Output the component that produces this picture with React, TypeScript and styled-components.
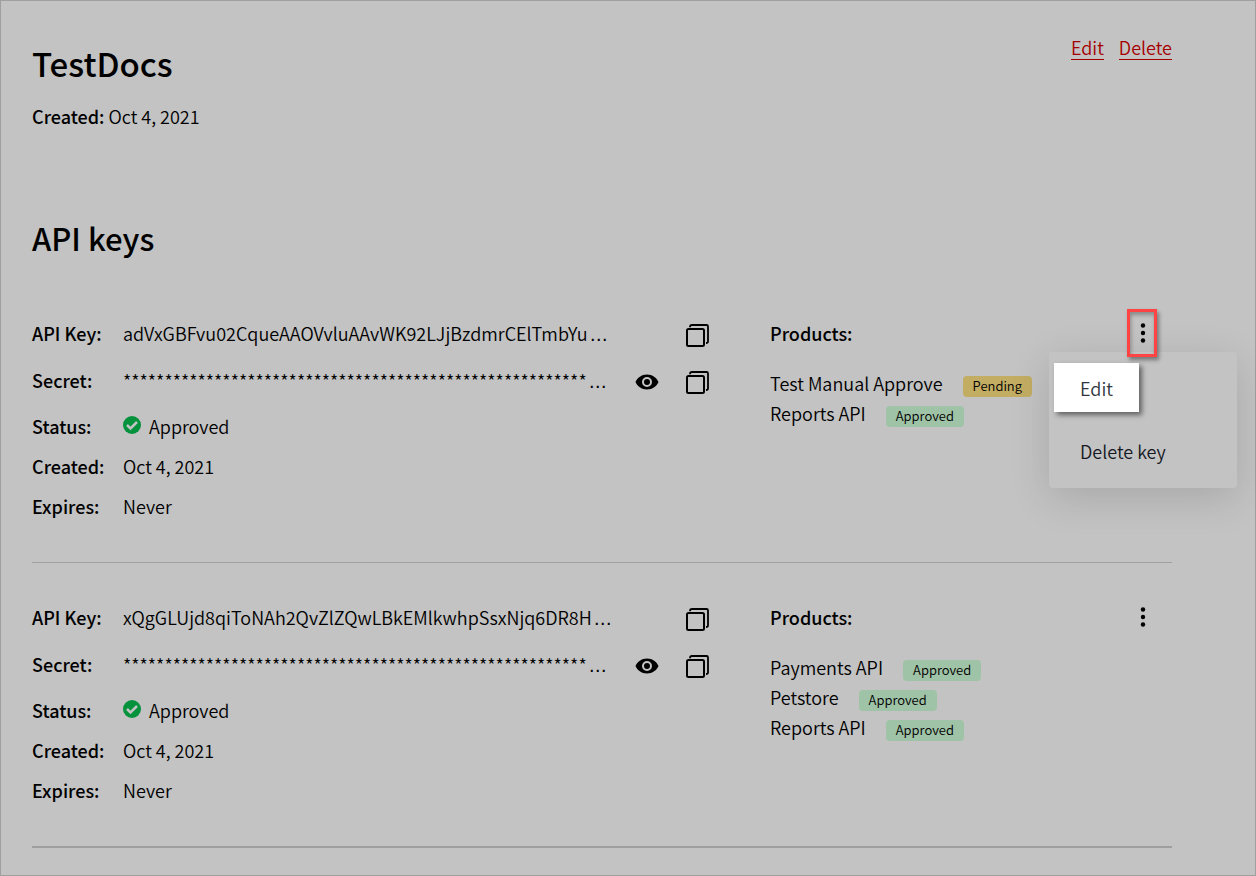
import React from "react";
import styled, { createGlobalStyle, css } from "styled-components";

const GlobalStyle = createGlobalStyle`
  *, *::before, *::after { box-sizing: border-box; }
  body {
    margin: 0;
    background: #c3c3c3;
    color: #000;
    font-family: "Noto Sans CJK KR", "Source Sans Pro", "Noto Sans", sans-serif;
    font-size: 18px;
    font-weight: 350;
    line-height: 30px;
  }
  h1, h2, h3, p, dl, dt, dd, ul { margin: 0; padding: 0; }
  button { font: inherit; color: inherit; background: none; border: 0; padding: 0; cursor: pointer; }
`;

const Page = styled.main`
  min-height: 100vh;
  padding: 32px 83px 26px 31px;
  border: 1px solid #9f9f9f;
`;

const Header = styled.header`
  display: flex;
  justify-content: space-between;
  align-items: flex-start;
`;

const Title = styled.h1`
  font-size: 33px;
  line-height: 40px;
  font-weight: 500;
  padding-top: 10px;
`;

const Actions = styled.nav`
  display: flex;
  gap: 15px;
  padding-top: 2px;
`;

const ActionLink = styled.a`
  color: #a50000;
  text-decoration: none;
  line-height: 24px;
  border-bottom: 1px solid #a50000;
`;

const Meta = styled.p`
  margin-top: 18px;
`;

const Strong = styled.strong`
  font-weight: 500;
`;

const SectionTitle = styled.h2`
  margin-top: 87px;
  margin-bottom: 60px;
  font-size: 31px;
  line-height: 40px;
  font-weight: 500;
`;

const KeyCard = styled.section<{ $last?: boolean }>`
  display: grid;
  grid-template-columns: minmax(0, 678fr) minmax(0, 402fr);
  column-gap: 60px;
  padding-bottom: 31px;
  border-bottom: ${(p) => (p.$last ? 2 : 1)}px solid #9f9f9f;
  & + & { margin-top: 39px; }
`;

const Fields = styled.dl`
  display: flex;
  flex-direction: column;
`;

const Field = styled.div<{ $gap?: number }>`
  display: flex;
  align-items: center;
  height: 30px;
  margin-bottom: ${(p) => p.$gap ?? 10}px;
`;

const Label = styled.dt`
  flex: 0 0 91px;
  font-weight: 500;
`;

const Value = styled.dd`
  display: flex;
  align-items: center;
  flex: 1;
  min-width: 0;
  white-space: nowrap;
`;

const ValueText = styled.span`
  flex: 1;
  min-width: 0;
`;

const Ellipsis = styled.span`
  margin-left: 2px;
  font-family: "DejaVu Sans", sans-serif;
  font-weight: 400;
  line-height: 1;
`;

const IconButton = styled.button`
  display: flex;
  width: 24px;
  height: 24px;
  margin-top: 6px;
  & + & { margin-left: 27px; }
`;

const StatusIcon = styled.svg`
  margin: 0 8px 3px 0;
`;

const Side = styled.div`
  position: relative;
`;

const SideHead = styled.div`
  display: flex;
  justify-content: space-between;
  align-items: center;
  height: 30px;
  padding-right: 15px;
`;

const SideTitle = styled.h3`
  font-size: 18px;
  line-height: 30px;
  font-weight: 500;
`;

const MoreButton = styled.button<{ $active?: boolean }>`
  display: flex;
  align-items: center;
  justify-content: center;
  width: 30px;
  height: 48px;
  padding-left: 2px;
  border: 3px solid transparent;
  position: relative;
  z-index: 2;
  ${(p) =>
    p.$active &&
    css`
      border-color: #ff4343;
      box-shadow: 2px 3px 4px rgba(0, 0, 0, 0.4), inset 1px 3px 4px rgba(0, 0, 0, 0.3);
    `}
`;

const Products = styled.ul`
  list-style: none;
  margin-top: 20px;
`;

const Product = styled.li`
  display: flex;
  align-items: center;
  gap: 20px;
  height: 30px;
  white-space: nowrap;
`;

const Badge = styled.span<{ $pending?: boolean }>`
  margin-top: 7px;
  padding: 0 10px 1px;
  border-radius: 4px;
  font-size: 13px;
  line-height: 20px;
  background: ${(p) => (p.$pending ? "#c3ad63" : "#9fc3a6")};
`;

const Menu = styled.div`
  position: absolute;
  z-index: 1;
  top: 34px;
  right: -65px;
  display: flex;
  flex-direction: column;
  align-items: flex-start;
  gap: 14px;
  width: 188px;
  height: 136px;
  padding: 11px 5px;
  border-radius: 4px;
  background: #c3c3c3;
  box-shadow: 0 10px 40px rgba(0, 0, 0, 0.14);
`;

const MenuItem = styled.button<{ $active?: boolean }>`
  height: 49px;
  padding: 0 26px;
  color: ${(p) => (p.$active ? "#2f3640" : "#14181f")};
  ${(p) =>
    p.$active &&
    css`
      background: #fff;
      box-shadow: 3px 3px 5px rgba(0, 0, 0, 0.5);
    `}
`;

const CopyIcon = () => (
  <svg width="24" height="24" viewBox="0 0 24 24" fill="none" stroke="#000" strokeWidth="2">
    <rect x="1" y="5" width="17" height="17" rx="1.5" />
    <path d="M4 3.200C4 1.700 4.500 1 6 1H20.500Q22 1 22 2.500V17.500Q22 19 20 19" strokeWidth="1.800" />
  </svg>
);

const EyeIcon = () => (
  <svg width="24" height="24" viewBox="0 0 24 24">
    <path
      fillRule="evenodd"
      d="M12 3.500C6.500 3.500 2.300 6.700.5 11c1.800 4.300 6 7.500 11.500 7.500s9.700-3.200 11.500-7.500C21.700 6.700 17.500 3.500 12 3.500Zm0 12.500a5 5 0 1 1 0-10 5 5 0 0 1 0 10Zm0-8a3 3 0 1 0 0 6 3 3 0 0 0 0-6Z"
    />
  </svg>
);

const CheckIcon = () => (
  <StatusIcon width="18" height="18" viewBox="0 0 18 18" aria-hidden="true">
    <circle cx="9" cy="9" r="9" fill="#04923c" />
    <path d="M4 9l3.500 3.500L14 6" fill="none" stroke="#c3c3c3" strokeWidth="2.500" />
  </StatusIcon>
);

const DotsIcon = () => (
  <svg width="6" height="20" viewBox="0 0 6 20">
    <circle cx="3" cy="2.500" r="2.200" />
    <circle cx="3" cy="10" r="2.200" />
    <circle cx="3" cy="17.500" r="2.200" />
  </svg>
);

type ProductInfo = { name: string; status: "Approved" | "Pending" };
type ApiKey = { value: string; products: ProductInfo[]; menuOpen?: boolean };

const keys: ApiKey[] = [
  {
    value: "adVxGBFvu02CqueAAOVvluAAvWK92LJjBzdmrCElTmbYu",
    menuOpen: true,
    products: [
      { name: "Test Manual Approve", status: "Pending" },
      { name: "Reports API", status: "Approved" },
    ],
  },
  {
    value: "xQgGLUjd8qiToNAh2QvZlZQwLBkEMlkwhpSsxNjq6DR8H",
    products: [
      { name: "Payments API", status: "Approved" },
      { name: "Petstore", status: "Approved" },
      { name: "Reports API", status: "Approved" },
    ],
  },
];

const secret = "*".repeat(56);

export default function App() {
  return (
    <>
      <GlobalStyle />
      <Page>
        <Header>
          <Title>TestDocs</Title>
          <Actions>
            <ActionLink href="#edit">Edit</ActionLink>
            <ActionLink href="#delete">Delete</ActionLink>
          </Actions>
        </Header>
        <Meta>
          <Strong>Created:</Strong> Oct 4, 2021
        </Meta>
        <SectionTitle>API keys</SectionTitle>
        {keys.map((key, index) => (
          <KeyCard key={key.value} $last={index === keys.length - 1}>
            <Fields>
              <Field $gap={17}>
                <Label>API Key:</Label>
                <Value>
                  <ValueText>{key.value}<Ellipsis>…</Ellipsis></ValueText>
                  <IconButton aria-label="Copy API key"><CopyIcon /></IconButton>
                </Value>
              </Field>
              <Field $gap={16}>
                <Label>Secret:</Label>
                <Value>
                  <ValueText>{secret}<Ellipsis>…</Ellipsis></ValueText>
                  <IconButton aria-label="Show secret"><EyeIcon /></IconButton>
                  <IconButton aria-label="Copy secret"><CopyIcon /></IconButton>
                </Value>
              </Field>
              <Field>
                <Label>Status:</Label>
                <Value><CheckIcon />Approved</Value>
              </Field>
              <Field>
                <Label>Created:</Label>
                <Value>Oct 4, 2021</Value>
              </Field>
              <Field>
                <Label>Expires:</Label>
                <Value>Never</Value>
              </Field>
            </Fields>
            <Side>
              <SideHead>
                <SideTitle>Products:</SideTitle>
                <MoreButton $active={key.menuOpen} aria-label="Key actions"><DotsIcon /></MoreButton>
              </SideHead>
              <Products>
                {key.products.map((product) => (
                  <Product key={product.name}>
                    {product.name}
                    <Badge $pending={product.status === "Pending"}>{product.status}</Badge>
                  </Product>
                ))}
              </Products>
              {key.menuOpen && (
                <Menu>
                  <MenuItem $active>Edit</MenuItem>
                  <MenuItem>Delete key</MenuItem>
                </Menu>
              )}
            </Side>
          </KeyCard>
        ))}
      </Page>
    </>
  );
}
